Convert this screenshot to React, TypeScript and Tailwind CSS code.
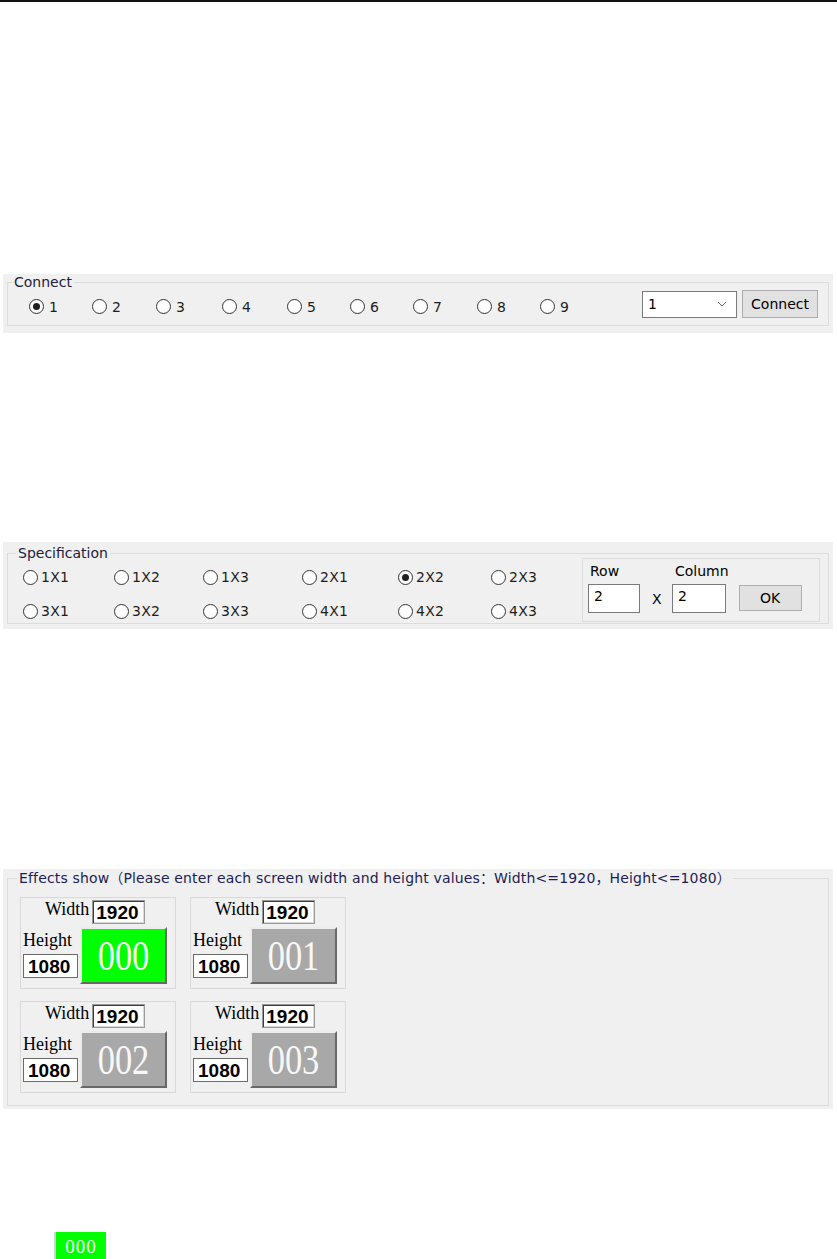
import React from "react";

const ui = "font-['DejaVu_Sans','Noto_Sans_CJK_SC',sans-serif]";
const serif = "font-['Liberation_Serif','Times_New_Roman',serif]";

type RadioProps = { label: string; checked?: boolean; gapClass: string };

function Radio({ label, checked, gapClass }: RadioProps) {
  return (
    <span className={`inline-flex items-center ${gapClass}`}>
      <span className="flex h-[15px] w-[15px] items-center justify-center rounded-full border border-[#333333] bg-white">
        {checked && <span className="h-[7px] w-[7px] rounded-full bg-[#1f1f1f]" />}
      </span>
      <span className="text-[14px] leading-[16px] tracking-[0.3px] text-[#1e1e1e]">{label}</span>
    </span>
  );
}

function ChevronDown() {
  return (
    <svg width="10" height="6" viewBox="0 0 10 6" fill="none">
      <path d="M1 1l4 4 4-4" stroke="#606060" strokeWidth="1" />
    </svg>
  );
}

const tiles = [
  { id: "000", active: true },
  { id: "001", active: false },
  { id: "002", active: false },
  { id: "003", active: false },
];

function Tile({ id, active }: { id: string; active: boolean }) {
  return (
    <div className="h-[92px] w-[156px] border border-[#d9d9d9] bg-[#f0f0f0]">
      <div className="flex items-start pl-[24px]">
        <span className={`${serif} mt-[1px] text-[18px] leading-[20px] text-black`}>Width</span>
        <div className="ml-[3px] mt-[2px] flex h-[24px] w-[53px] items-center border border-[#9a9a9a] bg-white pl-[3px] shadow-[inset_1px_1px_0_#3c3c3c,inset_-1px_-1px_0_#d8d8d8]">
          <span className="font-['Liberation_Sans',Arial,sans-serif] text-[19px] font-bold leading-none text-black">
            1920
          </span>
        </div>
      </div>
      <div className="mt-[3px] flex items-start pl-[2px]">
        <div className="flex flex-col">
          <span className={`${serif} mt-[3px] text-[18px] leading-[20px] text-black`}>Height</span>
          <div className="mt-[4px] flex h-[24px] w-[55px] items-center border border-[#6a6a6a] bg-white pl-[4px]">
            <span className="font-['Liberation_Sans',Arial,sans-serif] text-[19px] font-bold leading-none text-black">
              1080
            </span>
          </div>
        </div>
        <div
          className={`ml-[2px] flex h-[57px] w-[87px] items-center justify-center overflow-hidden border-2 border-t-[#ececec] border-l-[#ececec] border-b-[#686868] border-r-[#686868] ${
            active ? "bg-[#00ff00]" : "bg-[#a8a8a8]"
          }`}
        >
          <span className={`${serif} inline-block scale-x-[0.82] text-[42px] leading-none text-[#f8f8f8]`}>
            {id}
          </span>
        </div>
      </div>
    </div>
  );
}

export default function App() {
  const connectNums = ["1", "2", "3", "4", "5", "6", "7", "8", "9"];
  const specs = ["1X1", "1X2", "1X3", "2X1", "2X2", "2X3", "3X1", "3X2", "3X3", "4X1", "4X2", "4X3"];

  return (
    <div className={`${ui} min-h-[1259px] w-[837px] overflow-hidden bg-white`}>
      <div className="h-[2px] w-full bg-[#111111]" />

      {/* Connect */}
      <div className="ml-[3px] mt-[272px] w-[830px] bg-[#f0f0f0] px-[4px] pb-[7px]">
        <fieldset className="border border-[#dcdcdc]">
          <legend className="ml-[4px] px-[2px] text-[14px] leading-[16px] text-[#1b2040]">Connect</legend>
          <div className="flex items-center justify-between pb-[7px] pr-[10px]">
            <div className="mt-[5px] grid grid-cols-[63px_64px_66px_65px_63px_63px_64px_63px_auto] pl-[21px]">
              {connectNums.map((n) => (
                <Radio key={n} label={n} checked={n === "1"} gapClass="gap-[5px]" />
              ))}
            </div>
            <div className="flex items-center gap-[5px]">
              <div className="flex h-[27px] w-[95px] items-center justify-between border border-[#7a7a7a] bg-white pl-[5px] pr-[9px]">
                <span className="text-[14px] leading-[16px] text-black">1</span>
                <ChevronDown />
              </div>
              <button className="h-[28px] w-[76px] border border-[#adadad] bg-[#e1e1e1] text-[14px] leading-[16px] text-black">
                Connect
              </button>
            </div>
          </div>
        </fieldset>
      </div>

      {/* Specification */}
      <div className="ml-[3px] mt-[209px] w-[830px] bg-[#f0f0f0] px-[4px] pb-[5px] pt-[3px]">
        <fieldset className="border border-[#dcdcdc]">
          <legend className="ml-[8px] px-[2px] text-[14px] leading-[16px] text-[#1b2040]">Specification</legend>
          <div className="flex items-start justify-between pb-[1px]">
            <div className="mt-[6px] grid grid-cols-[91px_89px_99px_96px_93px_auto] gap-y-[14px] pl-[15px]">
              {specs.map((s) => (
                <div key={s} className="flex h-[20px] items-center">
                  <Radio label={s} checked={s === "2X2"} gapClass="gap-[3px]" />
                </div>
              ))}
            </div>
            <div className="-mt-[3px] mr-[8px] h-[64px] w-[238px] border border-[#dcdcdc] pl-[5px] pt-[4px]">
              <div className="flex items-end">
                <div className="flex flex-col">
                  <span className="pl-[2px] text-[14px] leading-[16px] text-black">Row</span>
                  <div className="mt-[5px] h-[29px] w-[52px] border border-[#7a7a7a] bg-white pl-[5px] pt-[3px] text-[14px] leading-[16px] text-black">
                    2
                  </div>
                </div>
                <span className="mb-[6px] ml-[12px] w-[20px] text-[14px] leading-[16px] text-black">X</span>
                <div className="flex flex-col">
                  <span className="pl-[3px] text-[14px] leading-[16px] text-black">Column</span>
                  <div className="mt-[5px] h-[29px] w-[54px] border border-[#7a7a7a] bg-white pl-[5px] pt-[3px] text-[14px] leading-[16px] text-black">
                    2
                  </div>
                </div>
                <button className="mb-[2px] ml-[10px] h-[26px] w-[63px] border border-[#adadad] bg-[#e1e1e1] text-[14px] leading-[16px] text-black">
                  OK
                </button>
              </div>
            </div>
          </div>
        </fieldset>
      </div>

      {/* Effects show */}
      <div className="ml-[3px] mt-[240px] w-[830px] bg-[#f0f0f0] px-[4px] pb-[3px] pt-[1px]">
        <fieldset className="border border-[#dcdcdc]">
          <legend className="ml-[9px] px-[2px] text-[14px] leading-[16px] tracking-[0.15px] text-[#1d1d55]">
            Effects show（Please enter each screen width and height values：Width&lt;=1920，Height&lt;=1080）
          </legend>
          <div className="grid grid-cols-[156px_156px] gap-x-[14px] gap-y-[12px] pb-[12px] pl-[12px] pt-[11px]">
            {tiles.map((t) => (
              <Tile key={t.id} id={t.id} active={t.active} />
            ))}
          </div>
        </fieldset>
      </div>

      {/* Preview label */}
      <div className="ml-[54px] mt-[123px] flex">
        <div className="h-[28px] w-[2px] bg-[#d0d0d0]" />
        <div className="flex h-[28px] w-[50px] items-center justify-center bg-[#00ff00]">
          <span className={`${serif} text-[19px] leading-none tracking-[1px] text-white`}>000</span>
        </div>
      </div>
    </div>
  );
}
